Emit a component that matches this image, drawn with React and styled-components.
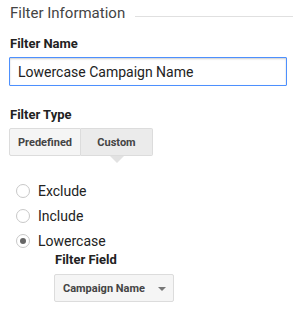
import React from "react";
import styled, { createGlobalStyle } from "styled-components";

const Global = createGlobalStyle`
  html, body { margin: 0; padding: 0; background: #fff; }
  body { font-family: Roboto, "Liberation Sans", Arial, sans-serif; }
`;

const Page = styled.div`
  width: 294px;
  padding: 3px 7px 0 9px;
  box-sizing: border-box;
`;

const Header = styled.div`
  display: flex;
  align-items: center;
  gap: 10px;
  margin-right: -6px;
`;

const HeaderTitle = styled.div`
  font-size: 15px;
  line-height: 20px;
  color: #444;
  padding-left: 1px;
  white-space: nowrap;
`;

const HeaderRule = styled.div`
  flex: 1;
  height: 1px;
  background: #e0e0e0;
  margin-top: 6px;
`;

const Label = styled.div`
  font-size: 13px;
  font-weight: 700;
  line-height: ${(p) => p.$lh || 16}px;
  color: #222;
  margin-top: ${(p) => p.$mt}px;
  margin-left: ${(p) => p.$ml || 1}px;
`;

const TextInput = styled.input`
  display: block;
  box-sizing: border-box;
  width: 278px;
  height: 29px;
  margin-top: 5px;
  padding: 0 8px;
  border: 1px solid #4d90fe;
  border-radius: 1px;
  box-shadow: inset 0 1px 2px rgba(0, 0, 0, 0.2);
  font-family: Roboto, "Liberation Sans", Arial, sans-serif;
  font-size: 14px;
  color: #222;
  outline: none;
`;

const SegGroup = styled.div`
  display: flex;
  margin-top: 5px;
`;

const SegButton = styled.div`
  position: relative;
  box-sizing: border-box;
  width: ${(p) => p.$w}px;
  height: 28px;
  display: flex;
  align-items: center;
  justify-content: center;
  font-size: 11px;
  font-weight: 700;
  color: #444;
  background: ${(p) => (p.$active ? "#ebebeb" : "#f5f5f5")};
  border: 1px solid #dcdcdc;
  border-left-width: ${(p) => (p.$first ? 1 : 0)}px;
  border-radius: ${(p) => (p.$first ? "2px 0 0 2px" : "0 2px 2px 0")};

  ${(p) =>
    p.$active &&
    `
    &::after {
      content: "";
      position: absolute;
      left: 50%;
      bottom: -8px;
      margin-left: -7px;
      border-left: 7px solid transparent;
      border-right: 7px solid transparent;
      border-top: 7px solid #e2e2e2;
    }
  `}
`;

const RadioList = styled.div`
  margin-top: 22px;
  padding-left: 7px;
`;

const RadioRow = styled.label`
  display: flex;
  align-items: center;
  gap: 8px;
  height: 25px;
  font-size: 14px;
  color: #222;
`;

const RadioCircle = styled.span`
  box-sizing: border-box;
  width: 14px;
  height: 14px;
  border-radius: 50%;
  border: 1px solid #c8c8c8;
  background: #fff;
  display: flex;
  align-items: center;
  justify-content: center;

  &::after {
    content: "";
    width: 6px;
    height: 6px;
    border-radius: 50%;
    background: ${(p) => (p.$checked ? "#666" : "transparent")};
  }
`;

const SubSection = styled.div`
  padding-left: 45px;
`;

const Dropdown = styled.div`
  box-sizing: border-box;
  width: 120px;
  height: 28px;
  margin-top: 7px;
  display: flex;
  align-items: center;
  justify-content: space-between;
  padding: 0 7px 0 8px;
  background: #f5f5f5;
  border: 1px solid #dcdcdc;
  border-radius: 2px;
  font-size: 11px;
  font-weight: 700;
  color: #444;
`;

const Caret = styled.span`
  width: 0;
  height: 0;
  border-left: 4px solid transparent;
  border-right: 4px solid transparent;
  border-top: 4px solid #777;
  margin-top: 2px;
`;

const radios = [
  { label: "Exclude", checked: false },
  { label: "Include", checked: false },
  { label: "Lowercase", checked: true },
];

export default function App() {
  return (
    <>
      <Global />
      <Page>
        <Header>
          <HeaderTitle>Filter Information</HeaderTitle>
          <HeaderRule />
        </Header>
        <Label $mt={13}>Filter Name</Label>
        <TextInput defaultValue="Lowercase Campaign Name" />
        <Label $mt={21}>Filter Type</Label>
        <SegGroup>
          <SegButton $w={72} $first>Predefined</SegButton>
          <SegButton $w={72} $active>Custom</SegButton>
        </SegGroup>
        <RadioList>
          {radios.map((r) => (
            <RadioRow key={r.label}>
              <RadioCircle $checked={r.checked} />
              {r.label}
            </RadioRow>
          ))}
        </RadioList>
        <SubSection>
          <Label $mt={0} $lh={14}>Filter Field</Label>
          <Dropdown>
            Campaign Name
            <Caret />
          </Dropdown>
        </SubSection>
      </Page>
    </>
  );
}
